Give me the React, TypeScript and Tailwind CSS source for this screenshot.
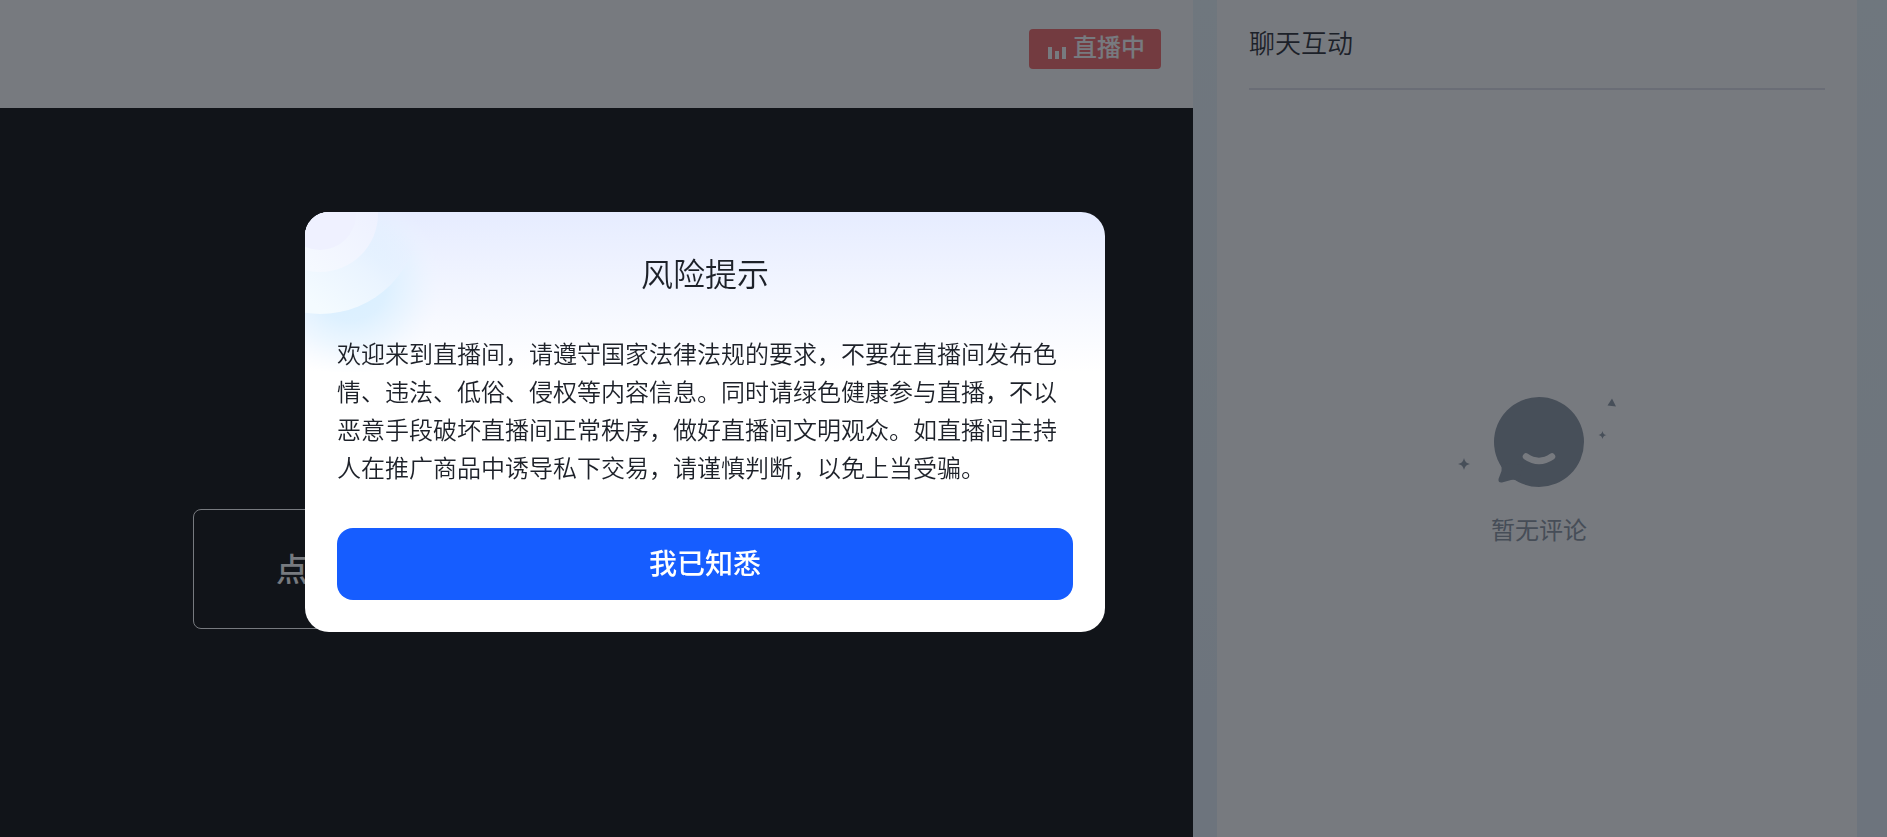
import { useId } from "react";

function LiveBadge() {
  return (
    <div className="flex h-10 items-center gap-1.5 rounded bg-[#f46362] pr-4 pl-[19px] text-2xl font-medium text-white">
      <svg className="mt-2 h-3 w-[19px] shrink-0" viewBox="0 0 19 12" fill="currentColor" aria-hidden="true">
        <rect x="0" y="0" width="4" height="12" />
        <rect x="7" y="4" width="4" height="8" />
        <rect x="14" y="0" width="4" height="12" />
      </svg>
      <span className="pb-1.5 leading-8">直播中</span>
    </div>
  );
}

function EmptyComments() {
  return (
    <svg className="h-[100px] w-[170px]" viewBox="0 0 170 100" aria-hidden="true">
      <g fill="#8893a0">
        <circle cx="85" cy="47" r="45" />
        <path d="M46 68q2.500 4 1.500 8l-3 8q-.5 4 3.500 3.500l9-2.500q3-1 7 1l6-16Z" />
        <path d="M158 3.500 162 11.500 153.500 10.500Z" />
        <path d="M148.500 36q.7 3.800 4 4-3.300.4-4 4-.7-3.600-4-4 3.300-.4 4-4Z" />
        <path d="M10 63q1 5.300 6 6-5 .7-6 6-1-5.300-6-6 5-.7 6-6Z" />
      </g>
      <path d="M72 61.500Q85 70.500 98 61.500" fill="none" stroke="#fff" strokeWidth="6.500" strokeLinecap="round" />
    </svg>
  );
}

function DialogBackdrop() {
  const id = useId();
  return (
    <svg className="absolute top-0 left-0 h-[160px] w-[240px]" viewBox="0 0 240 160" aria-hidden="true">
      <defs>
        <radialGradient id={`${id}glow`} cx="45" cy="72" r="92" gradientUnits="userSpaceOnUse">
          <stop offset="0" stopColor="#d8efff" />
          <stop offset="0.400" stopColor="#d9efff" stopOpacity="0.850" />
          <stop offset="0.700" stopColor="#e0f2ff" stopOpacity="0.450" />
          <stop offset="1" stopColor="#eef6ff" stopOpacity="0" />
        </radialGradient>
        <linearGradient id={`${id}disc`} x1="20" y1="100" x2="90" y2="10" gradientUnits="userSpaceOnUse">
          <stop offset="0" stopColor="#f4fbff" />
          <stop offset="0.500" stopColor="#eaf4ff" />
          <stop offset="1" stopColor="#e8eeff" stopOpacity="0" />
        </linearGradient>
        <linearGradient id={`${id}ring`} x1="10" y1="60" x2="70" y2="0" gradientUnits="userSpaceOnUse">
          <stop offset="0" stopColor="#f5f9ff" />
          <stop offset="1" stopColor="#eef1ff" />
        </linearGradient>
      </defs>
      <rect width="240" height="160" fill={`url(#${id}glow)`} />
      <circle cx="15" cy="2" r="100" fill={`url(#${id}disc)`} />
      <circle cx="15" cy="2" r="58" fill={`url(#${id}ring)`} />
      <circle cx="15" cy="2" r="36" fill="#eff1ff" />
    </svg>
  );
}

export default function App() {
  return (
    <div className="relative flex min-h-screen gap-6 overflow-hidden bg-linear-to-b from-[#ecf7fc] to-[#e6f0fa] pr-[30px] font-['Noto_Sans_CJK_SC',sans-serif] text-[#1d2129]">
      <main className="min-w-0 flex-[1193] bg-black">
        <header className="flex h-[108px] items-start justify-end bg-white px-8 pt-[29px]">
          <LiveBadge />
        </header>
        <section className="flex justify-center px-[193px] pt-[401px]">
          <button className="h-[120px] w-full rounded-lg border border-white pb-1 pl-[82px] text-left text-[32px] font-medium text-white">
            点
          </button>
        </section>
      </main>

      <aside className="min-w-0 flex-[640] bg-white">
        <div className="px-8">
          <h2 className="border-b-2 border-[#dfdfe9] pt-[22px] pb-[26px] text-[26px] leading-10 font-[350]">聊天互动</h2>
          <div className="flex flex-col items-center pt-[305px] pl-1 text-2xl leading-9 font-normal text-[#86909c]">
            <EmptyComments />
            <p className="pt-4">暂无评论</p>
          </div>
        </div>
      </aside>

      <div className="fixed inset-0 flex items-center justify-center bg-[#1d2129]/60 pt-[7px] pr-[477px]">
        <div
          role="dialog"
          aria-modal="true"
          aria-labelledby="risk-title"
          className="relative w-[800px] overflow-hidden rounded-3xl bg-white bg-linear-to-b from-[#e6ecff] to-white to-[160px] p-8"
        >
          <DialogBackdrop />
          <div className="relative">
            <h1 id="risk-title" className="pt-1.5 text-center text-[32px] leading-[44px] font-[350]">
              风险提示
            </h1>
            <p className="pt-10 text-2xl leading-[38px] font-[350]">
              欢迎来到直播间，请遵守国家法律法规的要求，不要在直播间发布色情、违法、低俗、侵权等内容信息。同时请绿色健康参与直播，不以恶意手段破坏直播间正常秩序，做好直播间文明观众。如直播间主持人在推广商品中诱导私下交易，请谨慎判断，以免上当受骗。
            </p>
            <button className="mt-[42px] h-[72px] w-full rounded-2xl bg-[#165dff] pb-1 text-[28px] font-medium text-white">
              我已知悉
            </button>
          </div>
        </div>
      </div>
    </div>
  );
}
